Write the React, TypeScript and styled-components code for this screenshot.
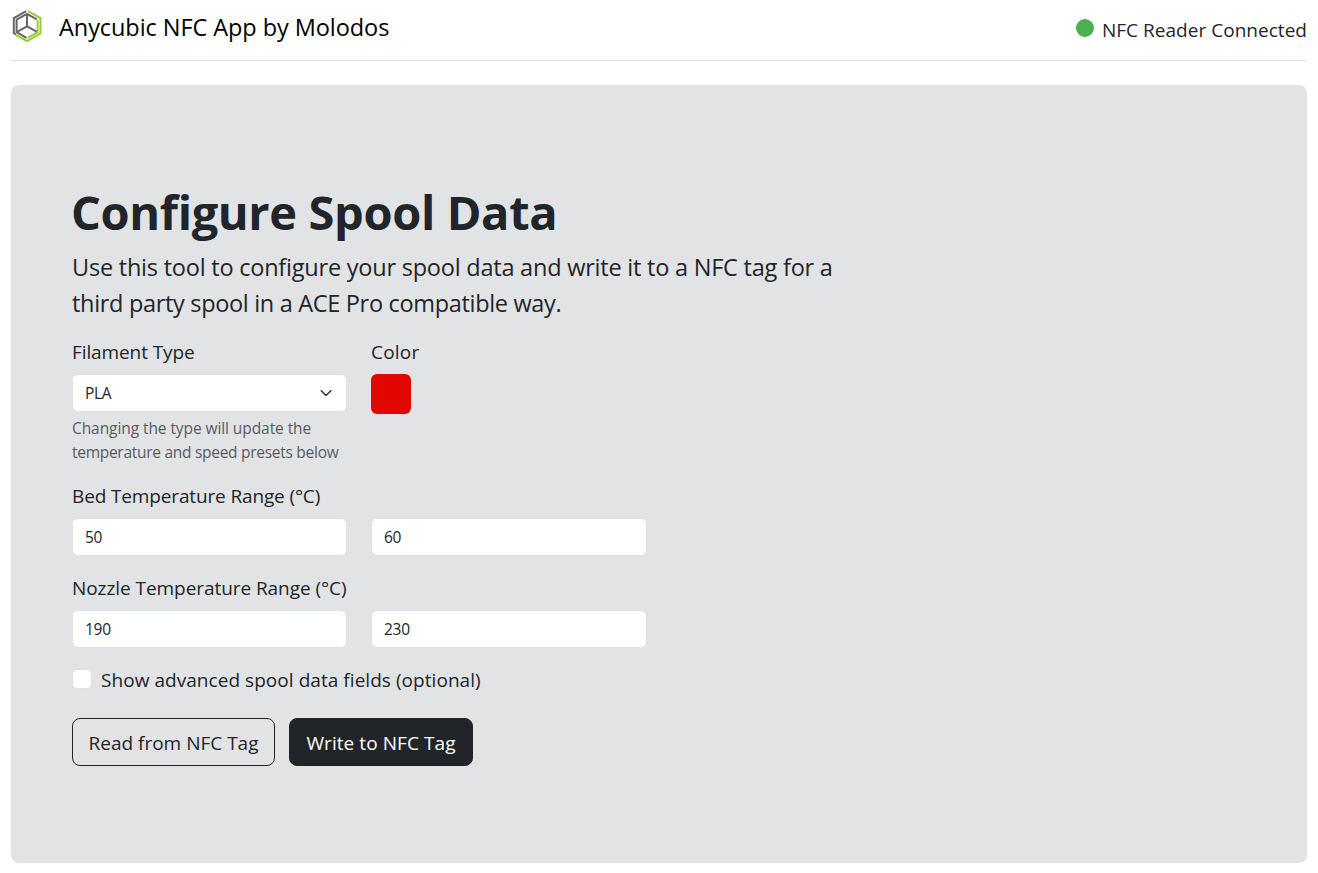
import React from "react";
import styled, { createGlobalStyle } from "styled-components";

const GlobalStyle = createGlobalStyle`
  *, *::before, *::after { box-sizing: border-box; }
  body {
    margin: 0;
    background: #fff;
    color: #212529;
    font-family: "Segoe UI", "Open Sans", "Noto Sans", sans-serif;
    font-size: 19px;
    line-height: 30px;
  }
`;

const Page = styled.div`
  padding: 0 11px 10px;
`;

const Header = styled.header`
  display: flex;
  justify-content: space-between;
  height: 61px;
  margin-bottom: 24px;
  border-bottom: 1px solid #dee2e6;
`;

const Brand = styled.div`
  display: flex;
  height: 54px;
  align-items: center;
  gap: 16px;
  color: #000;
`;

const Logo = styled.svg`
  width: 32px;
  height: 34px;
  margin-top: -2px;
`;

const Text = styled.span<{ $spacing?: number }>`
  letter-spacing: ${({ $spacing = 0 }) => $spacing}px;
  white-space: nowrap;
`;

const BrandName = styled(Text)`
  font-size: 23.5px;
`;

const Status = styled.div`
  display: flex;
  height: 60px;
  align-items: center;
  gap: 8px;
`;

const Dot = styled.span`
  width: 18px;
  height: 18px;
  margin-top: -4px;
  border-radius: 50%;
  background: #4caf50;
`;

const Panel = styled.main`
  height: 778px;
  padding: 98px 61px 0;
  border-radius: 8px;
  background: #e1e3e5;
`;

const Title = styled.h1`
  margin: 0 0 8px -1px;
  font-size: 47px;
  font-weight: 700;
  line-height: 58px;
`;

const Lead = styled.p`
  margin: 0 0 16px;
  font-size: 23.5px;
  line-height: 36px;
`;

const Grid = styled.div<{ $gap: number }>`
  display: grid;
  grid-template-columns: 275px 276px;
  column-gap: 24px;
  margin-bottom: ${({ $gap }) => $gap}px;
`;

const Label = styled.label<{ $wide?: boolean }>`
  display: block;
  height: 30px;
  margin-bottom: 7px;
  grid-column: ${({ $wide }) => ($wide ? "1 / -1" : "auto")};
`;

const Field = styled.div`
  display: flex;
  align-items: center;
  justify-content: space-between;
  height: 38px;
  padding: 0 12px;
  border: 1px solid #dee2e6;
  border-radius: 6px;
  background: #fff;
  font-size: 15.5px;
`;

const Input = styled.input`
  width: 100%;
  height: 38px;
  padding: 0 12px;
  border: 1px solid #dee2e6;
  border-radius: 6px;
  background: #fff;
  color: #212529;
  font: inherit;
  font-size: 15.5px;
  letter-spacing: -0.3px;
`;

const Hint = styled.p`
  margin: 4px 0 0;
  color: #595c5f;
  font-size: 15.5px;
  line-height: 24px;
`;

const Swatch = styled.div`
  width: 40px;
  height: 40px;
  border-radius: 6px;
  background: #e20600;
`;

const Check = styled.label`
  display: flex;
  align-items: center;
  gap: 9px;
  height: 30px;
  margin-bottom: 23px;
`;

const Box = styled.span`
  width: 20px;
  height: 20px;
  margin-top: -3px;
  border: 1px solid #dee2e6;
  border-radius: 5px;
  background: #fff;
`;

const Actions = styled.div`
  display: flex;
  gap: 14px;
`;

const Button = styled.button<{ $solid?: boolean }>`
  display: flex;
  align-items: center;
  justify-content: center;
  width: ${({ $solid }) => ($solid ? 184 : 203)}px;
  height: 48px;
  padding: 2px 0 0;
  border: 1px solid #212529;
  border-radius: 8px;
  background: ${({ $solid }) => ($solid ? "#212529" : "transparent")};
  color: ${({ $solid }) => ($solid ? "#fff" : "#212529")};
  font: inherit;
`;

function CubeLogo() {
  return (
    <Logo viewBox="0 0 32 34" fill="none" strokeWidth="2">
      <path d="M15.2 2.2 2.8 9.2v15L5 25.5" stroke="#666" />
      <path d="M17 2.2 29.5 9.2v15.2L16 32 4.6 25.8" stroke="#96cd32" />
      <path d="M15.5 28.8 5.6 23.2V10.7L16 4.8l9.8 5.6" stroke="#666" />
      <path d="M26.6 11v12.2l-9.8 5.6" stroke="#96cd32" />
      <path d="M16 6v11.3M16 17.3 6.5 22.7M16 17.3l9.6 5.4" stroke="#666" />
    </Logo>
  );
}

export default function App() {
  return (
    <>
      <GlobalStyle />
      <Page>
        <Header>
          <Brand>
            <CubeLogo />
            <BrandName $spacing={-0.07}>Anycubic NFC App by Molodos</BrandName>
          </Brand>
          <Status>
            <Dot />
            <Text $spacing={0.03}>NFC Reader Connected</Text>
          </Status>
        </Header>
        <Panel>
          <Title><Text $spacing={-0.37}>Configure Spool Data</Text></Title>
          <Lead>
            <Text $spacing={-0.22}>Use this tool to configure your spool data and write it to a NFC tag for a</Text>
            <br />
            <Text $spacing={-0.32}>third party spool in a ACE Pro compatible way.</Text>
          </Lead>
          <Grid $gap={17}>
            <div>
              <Label><Text $spacing={-0.1}>Filament Type</Text></Label>
              <Field>
                <Text $spacing={-0.3}>PLA</Text>
                <svg width="16" height="16" viewBox="0 0 16 16" fill="none" stroke="#343a40" strokeWidth="1.6" strokeLinecap="round" strokeLinejoin="round">
                  <path d="m3.2 5.8 4.8 4.7 4.8-4.7" />
                </svg>
              </Field>
              <Hint>
                <Text $spacing={-0.08}>Changing the type will update the</Text>
                <br />
                <Text $spacing={-0.28}>temperature and speed presets below</Text>
              </Hint>
            </div>
            <div>
              <Label><Text $spacing={0.2}>Color</Text></Label>
              <Swatch />
            </div>
          </Grid>
          <Grid $gap={17}>
            <Label $wide><Text $spacing={-0.14}>Bed Temperature Range (°C)</Text></Label>
            <Input defaultValue="50" />
            <Input defaultValue="60" />
          </Grid>
          <Grid $gap={17}>
            <Label $wide><Text $spacing={-0.06}>Nozzle Temperature Range (°C)</Text></Label>
            <Input defaultValue="190" />
            <Input defaultValue="230" />
          </Grid>
          <Check>
            <Box />
            <Text $spacing={0.05}>Show advanced spool data fields (optional)</Text>
          </Check>
          <Actions>
            <Button><Text $spacing={0}>Read from NFC Tag</Text></Button>
            <Button $solid><Text $spacing={0.07}>Write to NFC Tag</Text></Button>
          </Actions>
        </Panel>
      </Page>
    </>
  );
}
